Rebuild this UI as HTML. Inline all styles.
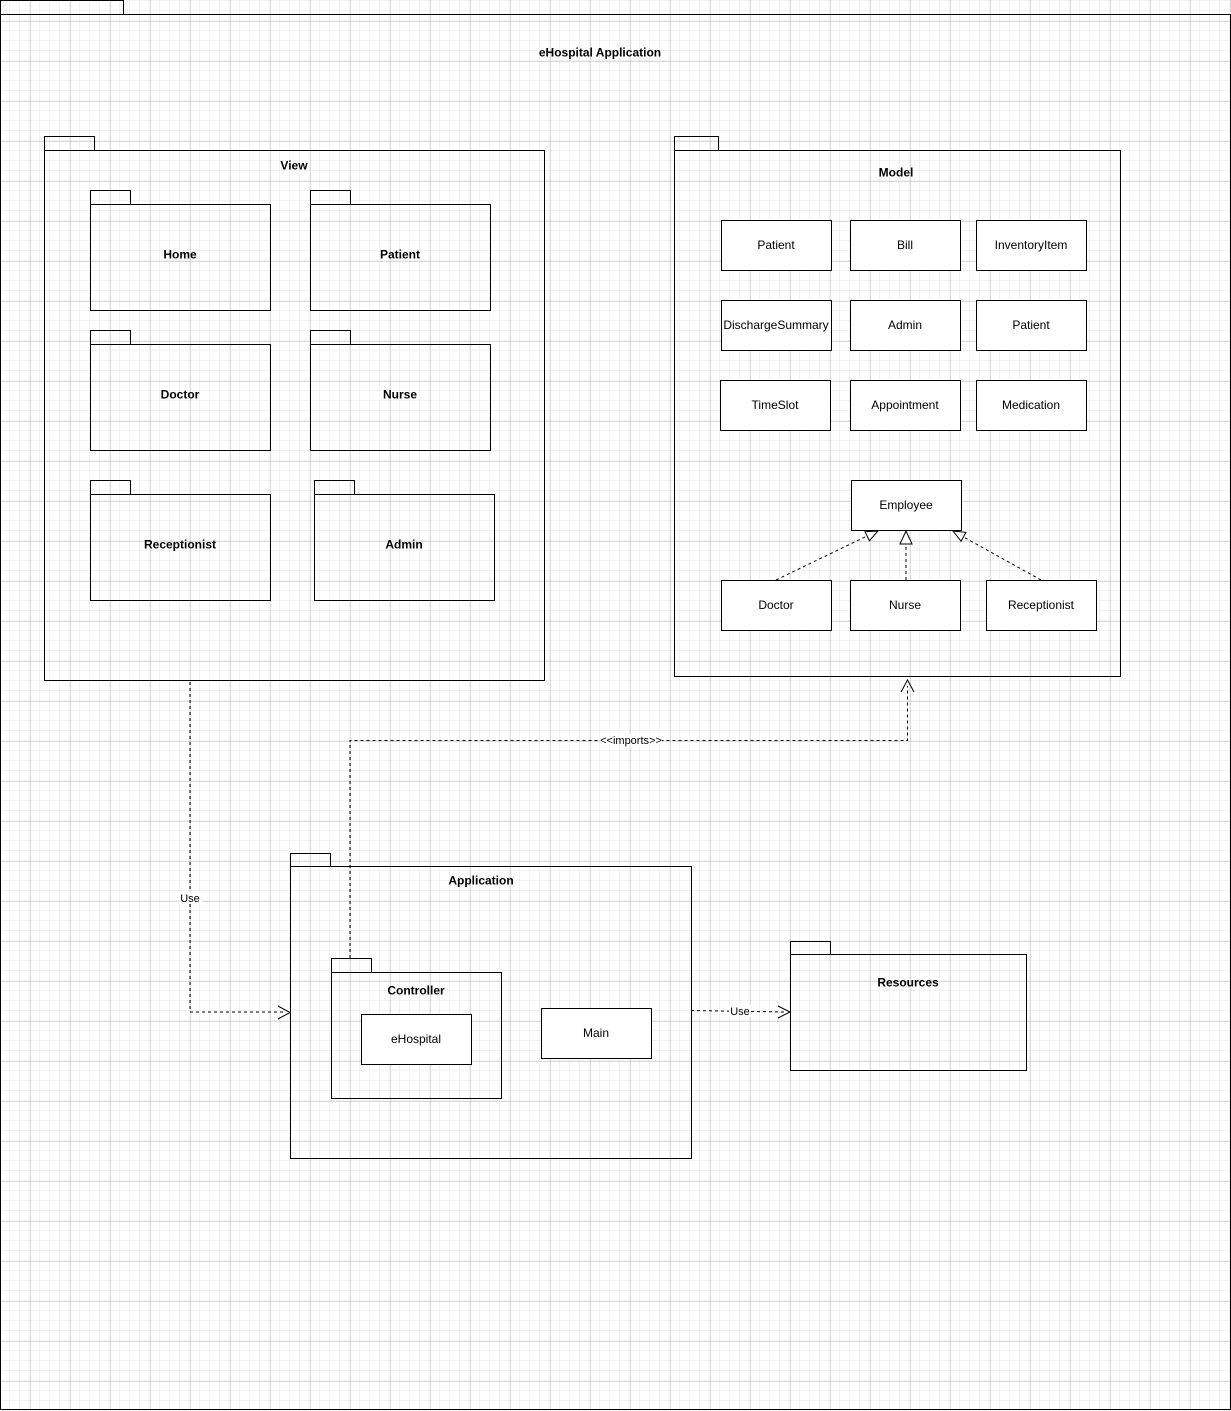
<!DOCTYPE html>
<html><head><meta charset="utf-8"><style>
html,body{margin:0;padding:0;background:#fff}
svg{display:block}
text{font-family:"Liberation Sans",Arial,sans-serif;font-size:12px;fill:#000}
.b{font-weight:bold}
</style></head><body>
<svg width="1231" height="1411" viewBox="0 0 1231 1411" xmlns="http://www.w3.org/2000/svg">
<defs>
<pattern id="minor" width="10" height="10" patternUnits="userSpaceOnUse" x="0" y="1">
<path d="M10 0V10M0 10H10" stroke="#e6e6e6" stroke-width="1" fill="none"/>
</pattern>
<pattern id="major" width="40" height="40" patternUnits="userSpaceOnUse" x="30.5" y="21.5">
<path d="M0 0V40M0 0H40" stroke="#b8b4b4" stroke-width="1" fill="none"/>
</pattern>
</defs>
<rect width="1231" height="1411" fill="#fff"/>
<rect width="1231" height="1411" fill="url(#minor)"/>
<rect width="1231" height="1411" fill="url(#major)"/>
<g fill="none" stroke="#000" stroke-width="1">
<path d="M0.5 14.5V0.5H123.5V14.5"/>
<rect x="0.5" y="14.5" width="1230" height="1395"/>
<path d="M44.5 150.5V136.5H94.5V150.5"/><rect x="44.5" y="150.5" width="500" height="530"/>
<path d="M90.5 204.5V190.5H130.5V204.5"/><rect x="90.5" y="204.5" width="180" height="106"/>
<path d="M310.5 204.5V190.5H350.5V204.5"/><rect x="310.5" y="204.5" width="180" height="106"/>
<path d="M90.5 344.5V330.5H130.5V344.5"/><rect x="90.5" y="344.5" width="180" height="106"/>
<path d="M310.5 344.5V330.5H350.5V344.5"/><rect x="310.5" y="344.5" width="180" height="106"/>
<path d="M90.5 494.5V480.5H130.5V494.5"/><rect x="90.5" y="494.5" width="180" height="106"/>
<path d="M314.5 494.5V480.5H354.5V494.5"/><rect x="314.5" y="494.5" width="180" height="106"/>
<path d="M674.5 150.5V136.5H718.5V150.5"/><rect x="674.5" y="150.5" width="446" height="526"/>
<path d="M290.5 866.5V853.5H330.5V866.5"/><rect x="290.5" y="866.5" width="401" height="292"/>
<path d="M331.5 972.5V958.5H371.5V972.5"/><rect x="331.5" y="972.5" width="170" height="126"/>
<path d="M790.5 954.5V941.5H830.5V954.5"/><rect x="790.5" y="954.5" width="236" height="116"/>
</g>
<g fill="#fff" stroke="#000" stroke-width="1">
<rect x="721.5" y="220.5" width="110" height="50"/>
<rect x="850.5" y="220.5" width="110" height="50"/>
<rect x="976.5" y="220.5" width="110" height="50"/>
<rect x="721.5" y="300.5" width="110" height="50"/>
<rect x="850.5" y="300.5" width="110" height="50"/>
<rect x="976.5" y="300.5" width="110" height="50"/>
<rect x="720.5" y="380.5" width="110" height="50"/>
<rect x="850.5" y="380.5" width="110" height="50"/>
<rect x="976.5" y="380.5" width="110" height="50"/>
<rect x="851.5" y="480.5" width="110" height="50"/>
<rect x="721.5" y="580.5" width="110" height="50"/>
<rect x="850.5" y="580.5" width="110" height="50"/>
<rect x="986.5" y="580.5" width="110" height="50"/>
<rect x="361.5" y="1014.5" width="110" height="50"/>
<rect x="541.5" y="1008.5" width="110" height="50"/>
</g>
<g fill="none" stroke="#000" stroke-width="1" stroke-dasharray="3,3">
<path d="M776 580L867 536"/>
<path d="M906 580V544"/>
<path d="M1041 580L963.5 537"/>
<path d="M190 682V1012H284"/>
<path d="M350 958V740.5H907.5V686"/>
<path d="M691 1010.5L784 1012"/>
</g>
<g fill="#fff" stroke="#000" stroke-width="1">
<path d="M878 531L865 531.7L869.4 540.7Z"/>
<path d="M900 544L906 531L912 544Z"/>
<path d="M953 531L965.9 532.4L961.1 541.2Z"/>
</g>
<g fill="none" stroke="#000" stroke-width="1">
<path d="M901 692L907.5 680L914 692"/>
<path d="M278 1006L290 1012.5L278 1019"/>
<path d="M778 1006L790 1012L778 1018"/>
</g>
<rect x="600" y="734" width="62" height="12" fill="#fff"/>
<rect x="179" y="892" width="23" height="12" fill="#fff"/>
<rect x="729" y="1005" width="22" height="12" fill="#fff"/>
<text x="600" y="56.5" text-anchor="middle" class="b">eHospital Application</text>
<text x="294" y="169.5" text-anchor="middle" class="b">View</text>
<text x="180" y="258.5" text-anchor="middle" class="b">Home</text>
<text x="400" y="258.5" text-anchor="middle" class="b">Patient</text>
<text x="180" y="398.5" text-anchor="middle" class="b">Doctor</text>
<text x="400" y="398.5" text-anchor="middle" class="b">Nurse</text>
<text x="180" y="548.5" text-anchor="middle" class="b">Receptionist</text>
<text x="404" y="548.5" text-anchor="middle" class="b">Admin</text>
<text x="896" y="176.5" text-anchor="middle" class="b">Model</text>
<text x="776" y="249" text-anchor="middle">Patient</text>
<text x="905" y="249" text-anchor="middle">Bill</text>
<text x="1031" y="249" text-anchor="middle">InventoryItem</text>
<text x="776" y="329" text-anchor="middle">DischargeSummary</text>
<text x="905" y="329" text-anchor="middle">Admin</text>
<text x="1031" y="329" text-anchor="middle">Patient</text>
<text x="775" y="409" text-anchor="middle">TimeSlot</text>
<text x="905" y="409" text-anchor="middle">Appointment</text>
<text x="1031" y="409" text-anchor="middle">Medication</text>
<text x="906" y="509" text-anchor="middle">Employee</text>
<text x="776" y="609" text-anchor="middle">Doctor</text>
<text x="905" y="609" text-anchor="middle">Nurse</text>
<text x="1041" y="609" text-anchor="middle">Receptionist</text>
<text x="631" y="744" text-anchor="middle" style="font-size:11px">&lt;&lt;imports&gt;&gt;</text>
<text x="190" y="902" text-anchor="middle" style="font-size:11px">Use</text>
<text x="740" y="1015" text-anchor="middle" style="font-size:11px">Use</text>
<text x="481" y="884.5" text-anchor="middle" class="b">Application</text>
<text x="416" y="994.5" text-anchor="middle" class="b">Controller</text>
<text x="416" y="1043" text-anchor="middle">eHospital</text>
<text x="596" y="1037" text-anchor="middle">Main</text>
<text x="908" y="986.5" text-anchor="middle" class="b">Resources</text>
</svg>
</body></html>
